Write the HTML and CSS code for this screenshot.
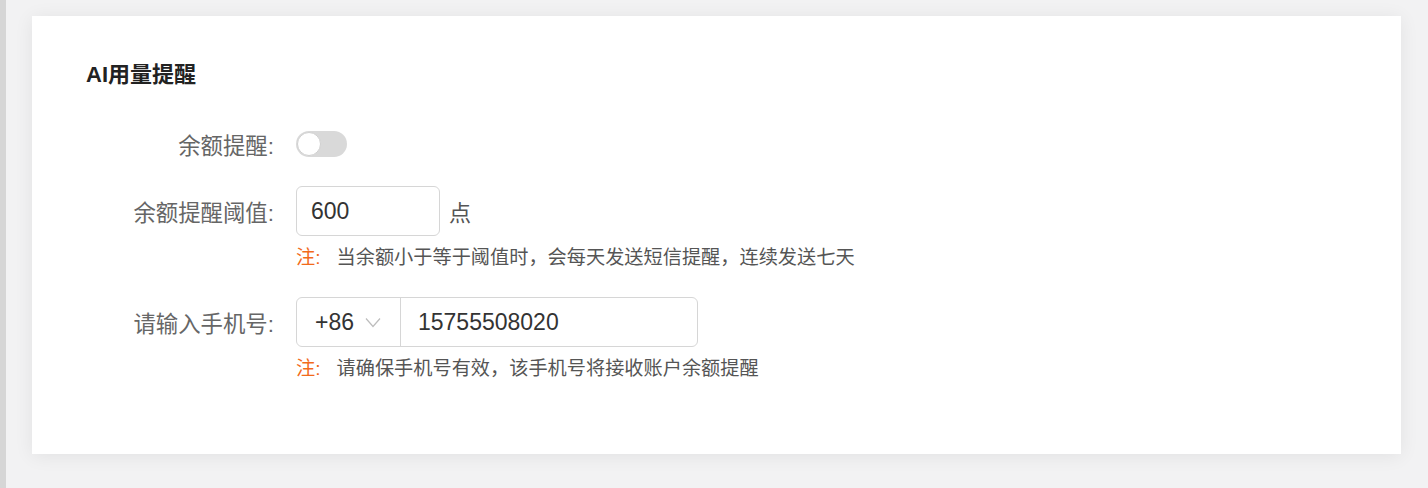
FILE: index.html
```html
<!DOCTYPE html>
<html lang="zh-CN">
<head>
  <meta charset="UTF-8">
  <meta name="viewport" content="width=device-width,initial-scale=1"/>
  <title>AI用量提醒</title>
  <link rel="stylesheet" href="styles.css">
</head>
<body>
  <div class="page">
    <div class="card">
      <h1>AI用量提醒</h1>

      <div class="item item-switch">
        <div class="row">
          <label class="label">余额提醒:</label>
          <span class="switch"><span class="knob"></span></span>
        </div>
      </div>

      <div class="item">
        <div class="row">
          <label class="label">余额提醒阈值:</label>
          <input class="input" type="text" value="600">
          <span class="unit">点</span>
        </div>
        <p class="note"><span class="note-tag">注:</span>当余额小于等于阈值时，会每天发送短信提醒，连续发送七天</p>
      </div>

      <div class="item">
        <div class="row">
          <label class="label">请输入手机号:</label>
          <div class="phone">
            <div class="code">
              +86
              <svg class="arrow" width="16" height="11" viewBox="0 0 16 11"><path d="M1 1.5 L8 9.5 L15 1.5" fill="none" stroke="#bdbdbd" stroke-width="1.2"/></svg>
            </div>
            <input class="number" type="text" value="15755508020">
          </div>
        </div>
        <p class="note"><span class="note-tag">注:</span>请确保手机号有效，该手机号将接收账户余额提醒</p>
      </div>
    </div>
  </div>
</body>
</html>
```

FILE: styles.css
```css
*{
  margin: 0; padding: 0;
  box-sizing: border-box;
  font-family: "Liberation Sans", "Noto Sans CJK SC", sans-serif;
}
body{
  background: #f2f2f3;
}
.page{
  height: 488px;
  border-left: 6px solid #d6d6d6;
  padding: 16px 27px 0 26px;
}
.card{
  height: 438px;
  background: #fff;
  box-shadow: 0 2px 18px rgba(0,0,0,0.07);
  padding: 44px 54px 0;
}
h1{
  font-size: 22px;
  line-height: 30px;
  font-weight: 700;
  color: #222;
  margin-bottom: 29px;
}
.item{
  margin-bottom: 25px;
}
.item-switch{
  margin-bottom: 17px;
}
.row{
  display: flex;
  align-items: center;
  height: 50px;
}
.label{
  width: 188px;
  margin-right: 22px;
  text-align: right;
  font-size: 22.4px;
  color: #666;
}
.switch{
  display: flex;
  align-items: center;
  width: 51px;
  height: 26px;
  border-radius: 13px;
  background: #d9d9d9;
  padding: 0 1px;
}
.knob{
  width: 24px;
  height: 24px;
  border-radius: 50%;
  background: #fff;
  border: 1px solid #d0d0d0;
}
.input{
  width: 144px;
  height: 50px;
  border: 1px solid #d6d6d6;
  border-radius: 6px;
  padding: 0 14px;
  font-size: 23px;
  color: #333;
  outline: none;
}
.unit{
  margin-left: 9px;
  font-size: 22px;
  color: #555;
}
.phone{
  display: flex;
  width: 402px;
  height: 50px;
  border: 1px solid #d6d6d6;
  border-radius: 6px;
}
.code{
  display: flex;
  align-items: center;
  flex: 0 0 104px;
  padding-left: 18px;
  border-right: 1px solid #d6d6d6;
  font-size: 23px;
  color: #333;
}
.arrow{
  margin-left: 11px;
}
.number{
  flex: 1 1 0;
  min-width: 0;
  border: none;
  background: none;
  padding-left: 17px;
  font-size: 23px;
  color: #333;
  outline: none;
}
.note{
  margin: 8px 0 0 210px;
  font-size: 19.2px;
  line-height: 28px;
  color: #555;
}
.note-tag{
  color: #f26a1b;
  margin-right: 16px;
}
```
